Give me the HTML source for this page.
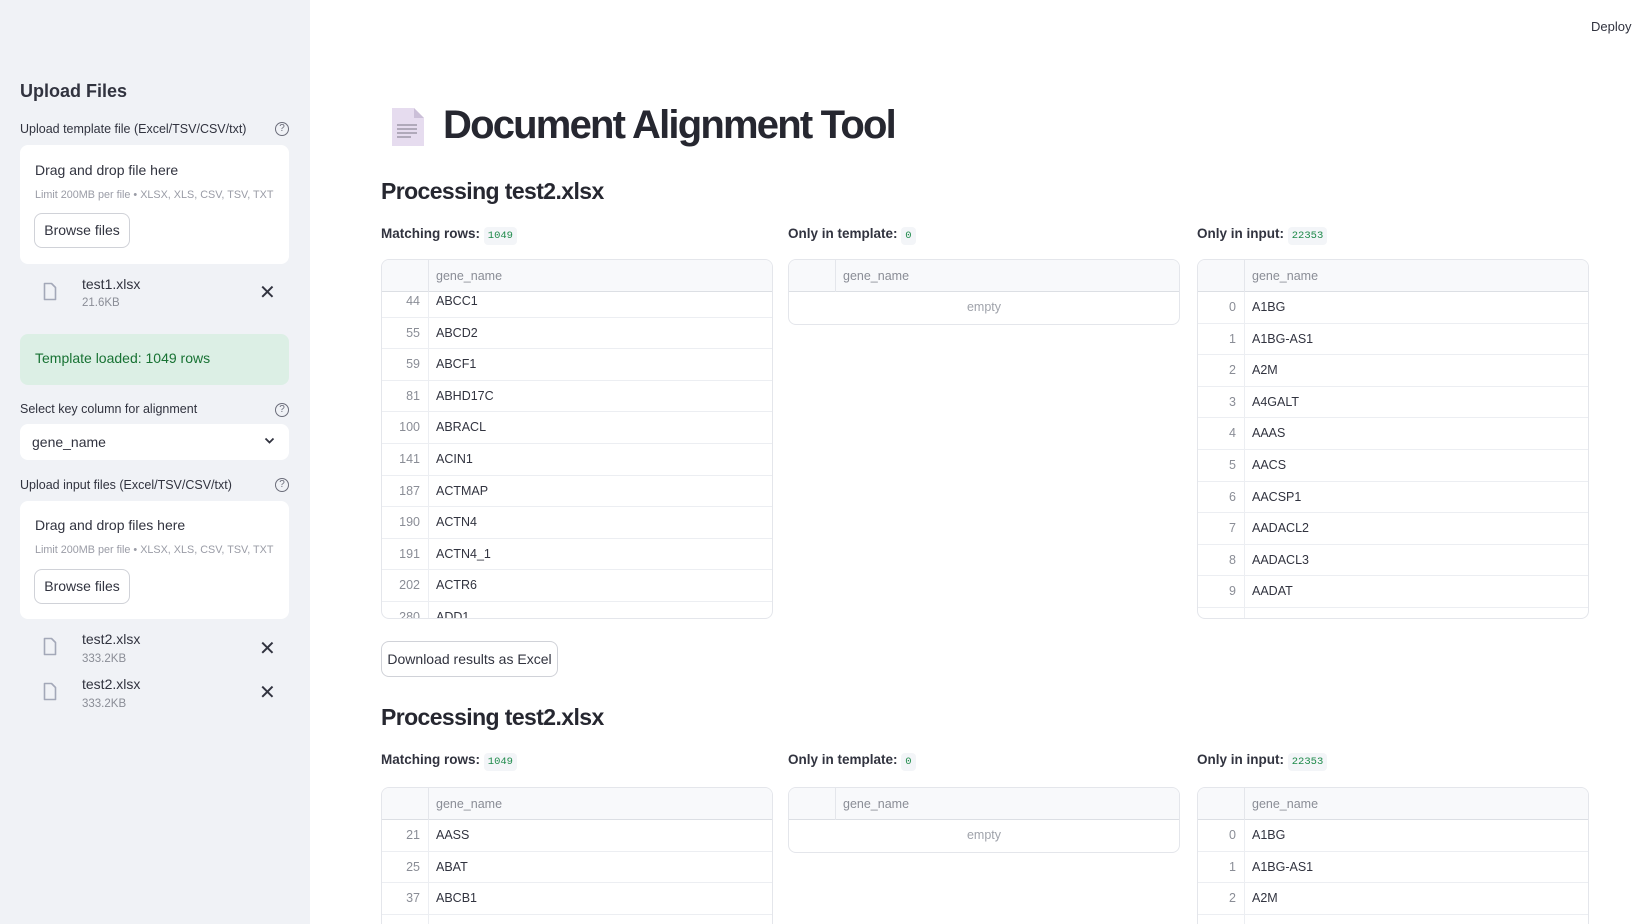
<!DOCTYPE html>
<html><head><meta charset="utf-8">
<style>
*{box-sizing:border-box;margin:0;padding:0}
html,body{width:1639px;height:924px;overflow:hidden}
body{background:#fff;font-family:"Liberation Sans",sans-serif;color:#31333f;position:relative}
.a{position:absolute;white-space:nowrap}
#sb{position:absolute;left:0;top:0;width:310px;height:924px;background:#f0f2f6}
.lbl{font-size:12.5px;color:#31333f}
.help{width:14px;height:14px;border:1.3px solid #6b6d7a;border-radius:50%;font-size:10px;text-align:center;line-height:12px;color:#6b6d7a}
.drop{position:absolute;left:20px;width:269px;background:#fff;border-radius:8px}
.btn{position:absolute;border:1px solid #d0d2d8;border-radius:8px;background:#fff;font-size:14px;text-align:center;color:#31333f}
.x{font-size:20px;color:#31333f}
.code{font-family:"Liberation Mono",monospace;font-size:10.5px;color:#1e8a4a;background:#f3f5f8;padding:3px 4px;border-radius:4px}
.tb{position:absolute;width:392px;border:1px solid #e4e6eb;border-radius:8px;overflow:hidden;background:#fff}
.hd{position:absolute;left:0;top:0;right:0;height:32px;background:#f8f9fb;border-bottom:1px solid #dcdfe4;z-index:2;font-size:12.5px;color:#8a8d96}
.hd .i{position:absolute;left:0;top:0;width:47px;height:32px;border-right:1px solid #e4e6eb}
.hd span{position:absolute;left:54px;top:9px}
.bd{position:absolute;left:0;right:0;top:32px;bottom:0;overflow:hidden}
.r{position:absolute;left:0;right:0;height:31.6px;border-bottom:1px solid #eceef2;font-size:12.5px}
.r .n{position:absolute;left:0;width:47px;height:100%;border-right:1px solid #eceef2;text-align:right;padding-right:8px;color:#8a8d96;line-height:31px}
.r .v{position:absolute;left:54px;line-height:31px;color:#31333f}
.fi{position:absolute;width:14px;height:19px}
</style></head><body>
<div id="sb">
 <div class="a" style="left:20px;top:81px;font-size:18px;font-weight:bold">Upload Files</div>
 <div class="a lbl" style="left:20px;top:122px">Upload template file (Excel/TSV/CSV/txt)</div>
 <div class="a help" style="left:275px;top:122px">?</div>
 <div class="drop" style="top:145px;height:119px">
  <div class="a" style="left:15px;top:17px;font-size:14px">Drag and drop file here</div>
  <div class="a" style="left:15px;top:44px;font-size:10.8px;color:#9a9ca6">Limit 200MB per file • XLSX, XLS, CSV, TSV, TXT</div>
  <div class="btn" style="left:14px;top:68px;width:96px;height:35px;line-height:33px">Browse files</div>
 </div>
 <svg class="fi" style="left:43px;top:282px" viewBox="0 0 14 19"><path d="M1.5 1.5h7l4 4v12h-11z" fill="none" stroke="#a3a8b8" stroke-width="1.6" stroke-linejoin="round"/></svg>
 <div class="a" style="left:82px;top:276px;font-size:14px">test1.xlsx</div>
 <div class="a" style="left:82px;top:297px;font-size:11.5px;color:#8a8d96">21.6KB</div>
 <div class="a x" style="left:259px;top:280px">✕</div>
 <div class="a" style="left:20px;top:334px;width:269px;height:51px;background:#dcefe5;border-radius:8px"></div>
 <div class="a" style="left:35px;top:350px;font-size:14px;color:#177233">Template loaded: 1049 rows</div>
 <div class="a lbl" style="left:20px;top:402px">Select key column for alignment</div>
 <div class="a help" style="left:275px;top:403px">?</div>
 <div class="a" style="left:20px;top:424px;width:269px;height:36px;background:#fff;border-radius:8px"></div>
 <div class="a" style="left:32px;top:434px;font-size:14px">gene_name</div>
 <svg class="a" style="left:264px;top:437px" width="11" height="8" viewBox="0 0 11 8"><path d="M1.5 1.5l4 4 4-4" fill="none" stroke="#31333f" stroke-width="1.8"/></svg>
 <div class="a lbl" style="left:20px;top:478px">Upload input files (Excel/TSV/CSV/txt)</div>
 <div class="a help" style="left:275px;top:478px">?</div>
 <div class="drop" style="top:501px;height:118px">
  <div class="a" style="left:15px;top:16px;font-size:14px">Drag and drop files here</div>
  <div class="a" style="left:15px;top:43px;font-size:10.8px;color:#9a9ca6">Limit 200MB per file • XLSX, XLS, CSV, TSV, TXT</div>
  <div class="btn" style="left:14px;top:68px;width:96px;height:35px;line-height:33px">Browse files</div>
 </div>
 <svg class="fi" style="left:43px;top:637px" viewBox="0 0 14 19"><path d="M1.5 1.5h7l4 4v12h-11z" fill="none" stroke="#a3a8b8" stroke-width="1.6" stroke-linejoin="round"/></svg>
 <div class="a" style="left:82px;top:631px;font-size:14px">test2.xlsx</div>
 <div class="a" style="left:82px;top:653px;font-size:11.5px;color:#8a8d96">333.2KB</div>
 <div class="a x" style="left:259px;top:636px">✕</div>
 <svg class="fi" style="left:43px;top:682px" viewBox="0 0 14 19"><path d="M1.5 1.5h7l4 4v12h-11z" fill="none" stroke="#a3a8b8" stroke-width="1.6" stroke-linejoin="round"/></svg>
 <div class="a" style="left:82px;top:676px;font-size:14px">test2.xlsx</div>
 <div class="a" style="left:82px;top:698px;font-size:11.5px;color:#8a8d96">333.2KB</div>
 <div class="a x" style="left:259px;top:680px">✕</div>
</div>

<div class="a" style="left:1591px;top:19px;font-size:13px">Deploy</div>

<svg class="a" style="left:391px;top:107px" width="34" height="40" viewBox="0 0 34 40"><path d="M1 1h22l10 10v28H1z" fill="#e6dcef"/><path d="M23 1v10h10z" fill="#cbbfd8"/><path d="M6 18h20M6 22h20M6 26h20M6 30h14" stroke="#8f8a9a" stroke-width="1.3"/></svg>
<div class="a" style="left:443px;top:103px;font-size:40px;font-weight:bold;letter-spacing:-1.8px;color:#262730">Document Alignment Tool</div>

<div class="a" style="left:381px;top:178px;font-size:23px;font-weight:bold;letter-spacing:-0.6px;color:#262730">Processing test2.xlsx</div>
<div class="a" style="left:381px;top:226px;font-size:13.5px;font-weight:bold">Matching rows: <span class="code" style="font-weight:normal">1049</span></div>
<div class="a" style="left:788px;top:226px;font-size:13.5px;font-weight:bold">Only in template: <span class="code" style="font-weight:normal">0</span></div>
<div class="a" style="left:1197px;top:226px;font-size:13.5px;font-weight:bold">Only in input: <span class="code" style="font-weight:normal">22353</span></div>

<div class="tb" style="left:381px;top:259px;height:360px">
 <div class="hd"><div class="i"></div><span>gene_name</span></div>
 <div class="bd">
  <div class="r" style="top:-6px"><div class="n">44</div><div class="v">ABCC1</div></div>
  <div class="r" style="top:25.6px"><div class="n">55</div><div class="v">ABCD2</div></div>
  <div class="r" style="top:57.2px"><div class="n">59</div><div class="v">ABCF1</div></div>
  <div class="r" style="top:88.8px"><div class="n">81</div><div class="v">ABHD17C</div></div>
  <div class="r" style="top:120.4px"><div class="n">100</div><div class="v">ABRACL</div></div>
  <div class="r" style="top:152px"><div class="n">141</div><div class="v">ACIN1</div></div>
  <div class="r" style="top:183.6px"><div class="n">187</div><div class="v">ACTMAP</div></div>
  <div class="r" style="top:215.2px"><div class="n">190</div><div class="v">ACTN4</div></div>
  <div class="r" style="top:246.8px"><div class="n">191</div><div class="v">ACTN4_1</div></div>
  <div class="r" style="top:278.4px"><div class="n">202</div><div class="v">ACTR6</div></div>
  <div class="r" style="top:310px"><div class="n">280</div><div class="v">ADD1</div></div>
 </div>
</div>
<div class="tb" style="left:788px;top:259px;height:66px">
 <div class="hd"><div class="i"></div><span>gene_name</span></div>
 <div class="a" style="left:0;right:0;top:40px;text-align:center;font-size:12.5px;color:#a0a3ab">empty</div>
</div>
<div class="tb" style="left:1197px;top:259px;height:360px">
 <div class="hd"><div class="i"></div><span>gene_name</span></div>
 <div class="bd">
  <div class="r" style="top:0"><div class="n">0</div><div class="v">A1BG</div></div>
  <div class="r" style="top:31.6px"><div class="n">1</div><div class="v">A1BG-AS1</div></div>
  <div class="r" style="top:63.2px"><div class="n">2</div><div class="v">A2M</div></div>
  <div class="r" style="top:94.8px"><div class="n">3</div><div class="v">A4GALT</div></div>
  <div class="r" style="top:126.4px"><div class="n">4</div><div class="v">AAAS</div></div>
  <div class="r" style="top:158px"><div class="n">5</div><div class="v">AACS</div></div>
  <div class="r" style="top:189.6px"><div class="n">6</div><div class="v">AACSP1</div></div>
  <div class="r" style="top:221.2px"><div class="n">7</div><div class="v">AADACL2</div></div>
  <div class="r" style="top:252.8px"><div class="n">8</div><div class="v">AADACL3</div></div>
  <div class="r" style="top:284.4px"><div class="n">9</div><div class="v">AADAT</div></div>
  <div class="r" style="top:316px"><div class="n">10</div><div class="v">AAGAB</div></div>
 </div>
</div>

<div class="btn" style="left:381px;top:641px;width:177px;height:36px;line-height:34px">Download results as Excel</div>

<div class="a" style="left:381px;top:704px;font-size:23px;font-weight:bold;letter-spacing:-0.6px;color:#262730">Processing test2.xlsx</div>
<div class="a" style="left:381px;top:752px;font-size:13.5px;font-weight:bold">Matching rows: <span class="code" style="font-weight:normal">1049</span></div>
<div class="a" style="left:788px;top:752px;font-size:13.5px;font-weight:bold">Only in template: <span class="code" style="font-weight:normal">0</span></div>
<div class="a" style="left:1197px;top:752px;font-size:13.5px;font-weight:bold">Only in input: <span class="code" style="font-weight:normal">22353</span></div>

<div class="tb" style="left:381px;top:787px;height:150px">
 <div class="hd"><div class="i"></div><span>gene_name</span></div>
 <div class="bd">
  <div class="r" style="top:0"><div class="n">21</div><div class="v">AASS</div></div>
  <div class="r" style="top:31.6px"><div class="n">25</div><div class="v">ABAT</div></div>
  <div class="r" style="top:63.2px"><div class="n">37</div><div class="v">ABCB1</div></div>
  <div class="r" style="top:94.8px"><div class="n">44</div><div class="v">ABCC1</div></div>
 </div>
</div>
<div class="tb" style="left:788px;top:787px;height:66px">
 <div class="hd"><div class="i"></div><span>gene_name</span></div>
 <div class="a" style="left:0;right:0;top:40px;text-align:center;font-size:12.5px;color:#a0a3ab">empty</div>
</div>
<div class="tb" style="left:1197px;top:787px;height:150px">
 <div class="hd"><div class="i"></div><span>gene_name</span></div>
 <div class="bd">
  <div class="r" style="top:0"><div class="n">0</div><div class="v">A1BG</div></div>
  <div class="r" style="top:31.6px"><div class="n">1</div><div class="v">A1BG-AS1</div></div>
  <div class="r" style="top:63.2px"><div class="n">2</div><div class="v">A2M</div></div>
  <div class="r" style="top:94.8px"><div class="n">3</div><div class="v">A4GALT</div></div>
 </div>
</div>
</body></html>
